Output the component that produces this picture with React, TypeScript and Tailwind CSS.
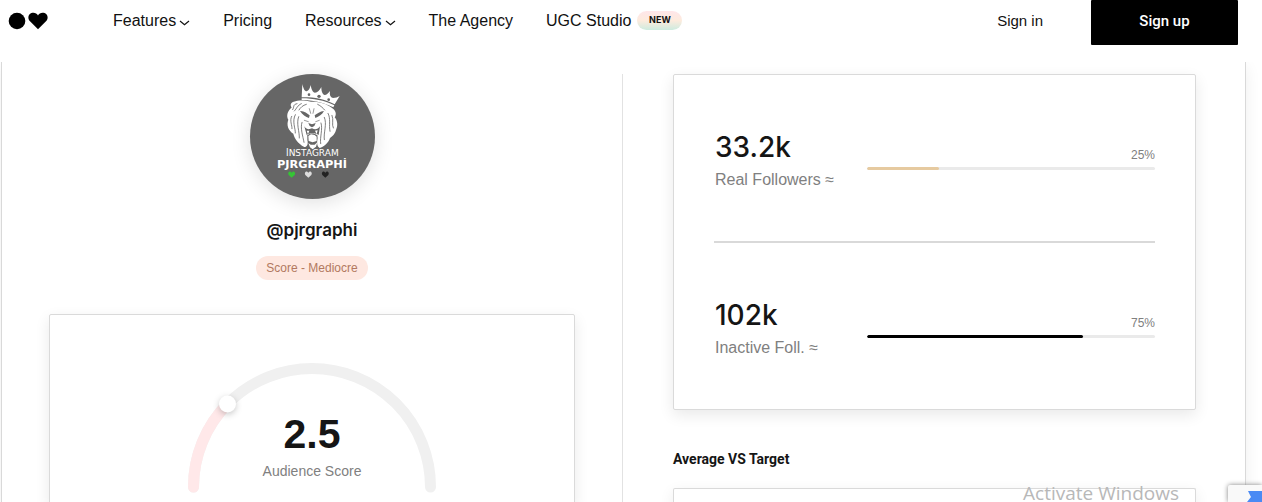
import type { ReactNode } from "react";

function Chevron() {
  return (
    <svg width="11" height="6" viewBox="0 0 11 6" fill="none" className="mt-1" aria-hidden="true">
      <path d="M1 1 L5.5 4.8 L10 1" stroke="#111" strokeWidth="1.2" />
    </svg>
  );
}

function Header() {
  return (
    <header className="z-10 flex h-[62px] shrink-0 items-start bg-white pr-6 pl-2">
      <a href="#home" aria-label="Home" className="flex h-[42px] w-[105px] items-center">
        <svg width="40" height="18" viewBox="0 0 40 18" aria-hidden="true">
          <circle cx="9" cy="9" r="8.3" />
          <path d="M30 17.3 L22 9.3 C19.3 6.4 20.1 2.3 23.4 1.1 C26 0.2 28.8 1.1 30 3.4 C31.2 1.1 34 0.2 36.6 1.1 C39.9 2.3 40.7 6.4 38 9.3 Z" />
        </svg>
      </a>
      <nav className="flex h-[42px] items-center gap-[33px] text-base text-[#111]">
        <button type="button" className="flex items-center gap-[3px]">Features<Chevron /></button>
        <a href="#pricing">Pricing</a>
        <button type="button" className="flex items-center gap-[3px]">Resources<Chevron /></button>
        <a href="#agency">The Agency</a>
        <a href="#ugc" className="flex items-center gap-1.5">
          UGC Studio
          <span className="mb-0.5 flex h-[19px] w-[45px] items-center justify-center rounded-full bg-linear-to-b from-[#ffe6e9] via-[#fdebdd] to-[#cdebdf] font-[Inter] text-[9px] font-bold">NEW</span>
        </a>
      </nav>
      <div className="ml-auto flex items-start gap-12">
        <a href="#signin" className="flex h-[42px] items-center text-[15px] text-[#111]">Sign in</a>
        <button type="button" className="h-[45px] w-[147px] rounded-[1px] bg-black pb-0.5 font-[Roboto] text-[15px] font-medium text-white">Sign up</button>
      </div>
    </header>
  );
}

const HEART = "M0 9 L-9 1 C-13 -5 -8 -12 -3 -9 L0 -6 L3 -9 C8 -12 13 -5 9 1 Z";

function Avatar() {
  return (
    <svg viewBox="30 30 375 375" role="img" aria-label="pjrgraphi" className="size-[125px] shrink-0 rounded-full bg-[#666] shadow-[0_4px_20px_rgba(0,0,0,0.12)]">
      <g fill="#fff">
        <path d="M187 60 C190 74 194 82 200 82 C206 81 210 72 212 63 C214 76 218 85 225 86 C233 86 239 78 244 69 C244 82 247 91 254 93 C260 93 265 87 270 81 C268 93 271 100 279 102 C287 102 293 99 299 96 L284 121 C252 104 218 99 185 100 Z" />
        <path d="M185 103 C221 103 251 109 283 124 L280 130 C247 114 218 108 185 108 Z" />
        <path d="M161 113 C177 107 197 109 213 113 C238 112 262 120 275 131 C287 138 291 150 284 160 C293 170 294 186 288 198 C284 212 276 218 270 222 C266 236 250 250 239 252 C231 247 230 238 233 222 L232 213 L202 213 L202 228 C206 242 199 250 193 249 C173 238 163 222 160 209 C144 199 139 182 145 167 C138 155 143 139 155 131 C149 121 154 115 161 113 Z" />
        <path d="M205 237 L210 250 L218 256 L228 248 L232 235 L224 242 L212 242 Z" />
      </g>
      <g fill="#666">
        <circle cx="207" cy="92" r="4" />
        <circle cx="237" cy="97" r="5" />
        <circle cx="266" cy="107" r="4" />
        <path d="M180 141 C192 140 202 149 209 154 L207 162 C197 159 187 152 180 141 Z" />
        <path d="M252 141 C240 142 231 149 224 154 L226 162 C237 158 246 152 252 141 Z" />
        <path d="M205 177 L216 181 L227 177 L223 186 L216 190 L209 186 Z" />
        <path d="M193 187 C202 201 211 194 216 193 C225 198 234 196 240 187 L236 213 C227 206 208 206 200 213 Z" />
        <path d="M203 214 C209 207 224 207 231 214 L229 233 L218 238 L207 232 Z" />
      </g>
      <path fill="#fff" d="M200 200 L204 211 L208 200 Z M225 200 L230 211 L233 199 Z M205 216 L213 211 L224 213 L230 218 L230 231 L218 235 L206 231 Z" />
      <g fill="none" stroke="#666" strokeWidth="2.5" strokeLinecap="round">
        <path d="M171 119 C157 122 164 128 158 137 M184 119 C171 125 171 133 163 141" />
        <path d="M199 121 C188 124 181 131 177 138 M233 121 C243 126 249 132 254 138" />
        <path d="M155 157 C148 170 157 185 156 194 M166 152 C155 172 167 194 166 207" />
        <path d="M176 158 C168 178 179 204 178 222 M186 175 C180 192 189 217 192 235" />
        <path d="M264 148 C273 163 266 183 270 202 M276 154 C282 168 274 182 280 192" />
        <path d="M253 160 C262 181 250 204 253 227 M243 177 C249 196 239 219 242 239" />
        <path d="M193 169 L205 173 M238 169 L227 173 M208 134 L212 148 M222 134 L219 148" strokeWidth="2" />
      </g>
      <g fill="#fff" textAnchor="middle" fontFamily="'DejaVu Sans', sans-serif">
        <text x="217" y="276" fontSize="27">İNSTAGRAM</text>
        <text x="216" y="311" fontSize="34" fontWeight="700">PJRGRAPHİ</text>
      </g>
      <path d={HEART} transform="translate(155 332)" fill="#35c435" />
      <path d={HEART} transform="translate(205 332)" fill="#ddd" />
      <path d={HEART} transform="translate(256 332)" fill="#222" />
    </svg>
  );
}

function Gauge() {
  return (
    <div className="grid justify-items-center">
      <svg width="248" height="140" viewBox="0 0 248 140" className="col-start-1 row-start-1 overflow-visible" aria-hidden="true">
        <path d="M5.5 124 A118.5 118.5 0 0 1 242.5 124" fill="none" stroke="#f0f0f0" strokeWidth="11" strokeLinecap="round" />
        <path d="M5.5 124 A118.5 118.5 0 0 1 40.2 40.2" fill="none" stroke="#ffe8e9" strokeWidth="11" strokeLinecap="round" />
        <circle cx="39.5" cy="41" r="8.5" fill="#fff" className="drop-shadow-[0_2px_3px_rgba(0,0,0,0.22)]" />
      </svg>
      <div className="col-start-1 row-start-1 flex flex-col items-center pt-[46px]">
        <strong className="text-[41px] leading-[50px] font-bold text-[#151515]">2.5</strong>
        <span className="text-sm leading-6 text-[#808080]">Audience Score</span>
      </div>
    </div>
  );
}

function Card({ className, children }: { className: string; children?: ReactNode }) {
  return (
    <section className={`rounded-[2px] border border-[#dadada] bg-white shadow-[0_5px_15px_rgba(0,0,0,0.09)] ${className}`}>
      {children}
    </section>
  );
}

function Stat({ value, label, percent, color }: { value: string; label: string; percent: number; color: string }) {
  return (
    <div className="flex pt-[52px] pb-12">
      <div className="w-[153px] shrink-0 pl-px">
        <p className="font-[Inter] text-[28px] leading-10 font-medium text-[#151515]">{value}</p>
        <p className="text-base leading-[26px] text-[#808080]">{label} ≈</p>
      </div>
      <div className="flex-1 pt-5">
        <p className="mb-1 text-right text-xs leading-4 text-[#808080]">{percent}%</p>
        <div className="h-[3px] overflow-hidden rounded-[2px] bg-[#eaeaea]">
          <div className={`h-full rounded-[2px] ${color}`} style={{ width: `${percent}%` }} />
        </div>
      </div>
    </div>
  );
}

export default function App() {
  return (
    <div className="relative flex h-screen flex-col overflow-hidden bg-white font-['Liberation_Sans',Arial,sans-serif]">
      <Header />
      <main className="mr-4 ml-px grid min-h-0 flex-1 grid-cols-[621fr_622fr] border-x border-[#d9d9d9] pt-3 shadow-[0_5px_15px_rgba(0,0,0,0.07)]">
        <div className="flex flex-col items-center border-r border-[#e2e2e2] px-[47px]">
          <Avatar />
          <h1 className="mt-[19px] font-[Inter] text-[17px] leading-6 font-semibold text-[#151515]">@pjrgraphi</h1>
          <p className="mt-3.5 flex h-6 shrink-0 items-center rounded-full bg-[#fee8e1] px-2.5 text-xs text-[#b27960]">Score - Mediocre</p>
          <Card className="mt-[34px] w-full flex-1 pt-12">
            <Gauge />
          </Card>
        </div>
        <div className="flex flex-col pr-[49px] pl-[50px]">
          <Card className="px-10">
            <Stat value="33.2k" label="Real Followers" percent={25} color="bg-[#e6caa0]" />
            <hr className="border-t-2 border-[#d9d9d9]" />
            <Stat value="102k" label="Inactive Foll." percent={75} color="bg-black" />
          </Card>
          <h2 className="mt-[39px] mb-[19px] font-[Roboto] text-sm leading-5 font-bold text-[#151515]">Average VS Target</h2>
          <Card className="flex-1 border-b-0" />
        </div>
      </main>
      <p className="pointer-events-none absolute right-[83px] bottom-0 font-['Open_Sans',sans-serif] text-[19px] leading-[18px] text-[#b8b8b8]">Activate Windows</p>
      <aside aria-label="reCAPTCHA" className="absolute right-0 bottom-0 h-[17px] w-[34px] overflow-hidden rounded-tl-[2px] bg-[#f9f9f9] shadow-[0_0_5px_#808080]">
        <svg width="34" height="17" viewBox="0 0 34 17" aria-hidden="true">
          <path d="M20 6 H34 V17 H19 L23 12 Z" fill="#4a8af4" />
        </svg>
      </aside>
    </div>
  );
}
